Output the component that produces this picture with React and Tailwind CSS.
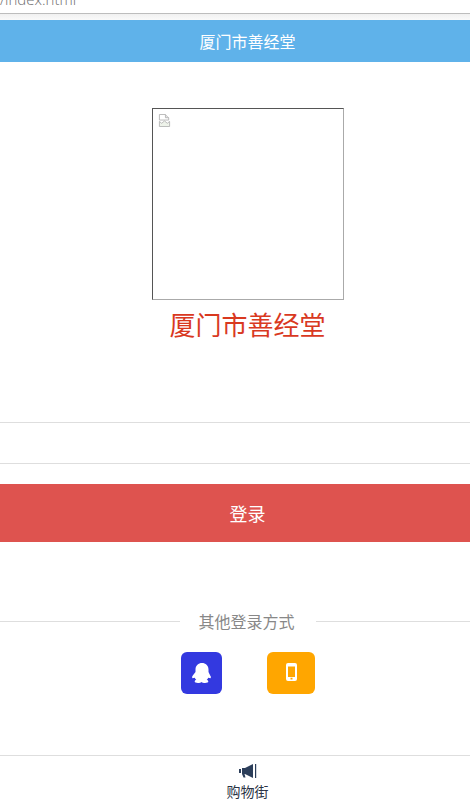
const cjk = { fontFamily: "'Noto Sans CJK SC', 'Liberation Sans', sans-serif" };

function BrokenImageIcon() {
  return (
    <svg width="13" height="13" viewBox="0 0 14 14" className="block">
      <path d="M1.500 .5H8L11.500 4V6.500H1.500Z" fill="#fff" stroke="#b5b5b5" />
      <path d="M8 .5V4H11.500" fill="#e4e4e4" stroke="#b5b5b5" />
      <path d="M1.500 8L4 10L7 7.500L10 10L12.500 8V13.500H1.500Z" fill="#eef3ea" stroke="#b5b5b5" />
    </svg>
  );
}

function QQIcon() {
  return (
    <svg width="20" height="21" viewBox="0 0 20 21" className="block">
      <path
        fill="#fff"
        d="M10 0C6.500 0 3.500 2.500 3.500 6.500V9L.8 12.500 0 14l.5 1.200 2.300-.5c.3.8.8 1.500 1.500 2.100-1 .4-1.600 1-1.600 1.800 0 1 1.300 1.400 3.300 1.400 1.500 0 2.800-.3 3.500-1 .7.7 2 1 3.500 1 2 0 3.300-.4 3.300-1.400 0-.8-.6-1.400-1.600-1.800.7-.6 1.200-1.300 1.500-2.100l2.300.5.5-1.200-.8-1.500L16.500 9V6.500C16.500 2.500 13.500 0 10 0Z"
      />
    </svg>
  );
}

function PhoneIcon() {
  return (
    <svg width="11" height="18" viewBox="0 0 11 18" className="block">
      <path
        fill="#fff"
        fillRule="evenodd"
        d="M2 0h7a2 2 0 0 1 2 2v14a2 2 0 0 1-2 2H2a2 2 0 0 1-2-2V2a2 2 0 0 1 2-2Zm0 3.500V14h7V3.500ZM4.500 14.800v1.800h2v-1.800Z"
      />
    </svg>
  );
}

function BullhornIcon() {
  return (
    <svg width="18" height="14" viewBox="0 0 18 14" className="block">
      <path fill="#2c3e5a" d="M0 5h2v4H0ZM3 4h3l8-4v14l-8-4H5.500l1 3.500H4.500L3 10Z" />
      <path fill="#2c3e5a" d="M16 0h1.200v14H16Z" />
    </svg>
  );
}

export default function App() {
  return (
    <div className="w-[470px] h-[806px] overflow-hidden bg-white" style={cjk}>
      <div className="w-[495px]">
        {/* browser address strip */}
        <div className="h-[14px] overflow-hidden border-b border-[#bdbdbd]">
          <div className="text-[15px] font-light leading-[14px] text-[#6e6e6e] -mt-[8px]" style={{ fontFamily: "'Open Sans', sans-serif" }}>/index.html</div>
        </div>
        <div className="h-[6px] bg-gradient-to-b from-[#f1f1f1] to-[#fafafa]" />

        <header className="h-[42px] bg-[#5fb2ea] flex items-center justify-center text-white text-base">
          厦门市善经堂
        </header>

        <div className="pt-[46px] flex flex-col items-center">
          <div className="w-[192px] h-[192px] border border-t-[#555] border-l-[#555] border-r-[#aaa] border-b-[#aaa] p-[5px]">
            <BrokenImageIcon />
          </div>
          <h1 className="text-[26px] leading-[48px] text-[#d9391f] font-normal">厦门市善经堂</h1>
        </div>

        <div className="mt-[74px] border-t border-b border-[#dedede] h-[42px]" />
        <div className="mt-5 h-[58px] bg-[#de534f] flex items-center justify-center text-white text-lg">
          登录
        </div>

        <div className="mt-[67px] flex items-center gap-[19px]">
          <div className="flex-1 border-t border-[#dedede]" />
          <span className="text-base leading-6 text-[#888] w-[98px] whitespace-nowrap">其他登录方式</span>
          <div className="flex-1 border-t border-[#dedede]" />
        </div>

        <div className="mt-[19px] pl-[181px] flex gap-[45px]">
          <div className="w-[41px] h-[42px] rounded-md bg-[#3339e0] flex items-center justify-center">
            <QQIcon />
          </div>
          <div className="w-[48px] h-[42px] rounded-md bg-[#ffa600] flex items-center justify-center pb-[2px]">
            <PhoneIcon />
          </div>
        </div>

        <footer className="mt-[61px] border-t border-[#dedede] pt-[8px] flex flex-col items-center">
          <BullhornIcon />
          <div className="text-sm leading-5 text-[#2a3344] mt-[3px]">购物街</div>
        </footer>
      </div>
    </div>
  );
}
